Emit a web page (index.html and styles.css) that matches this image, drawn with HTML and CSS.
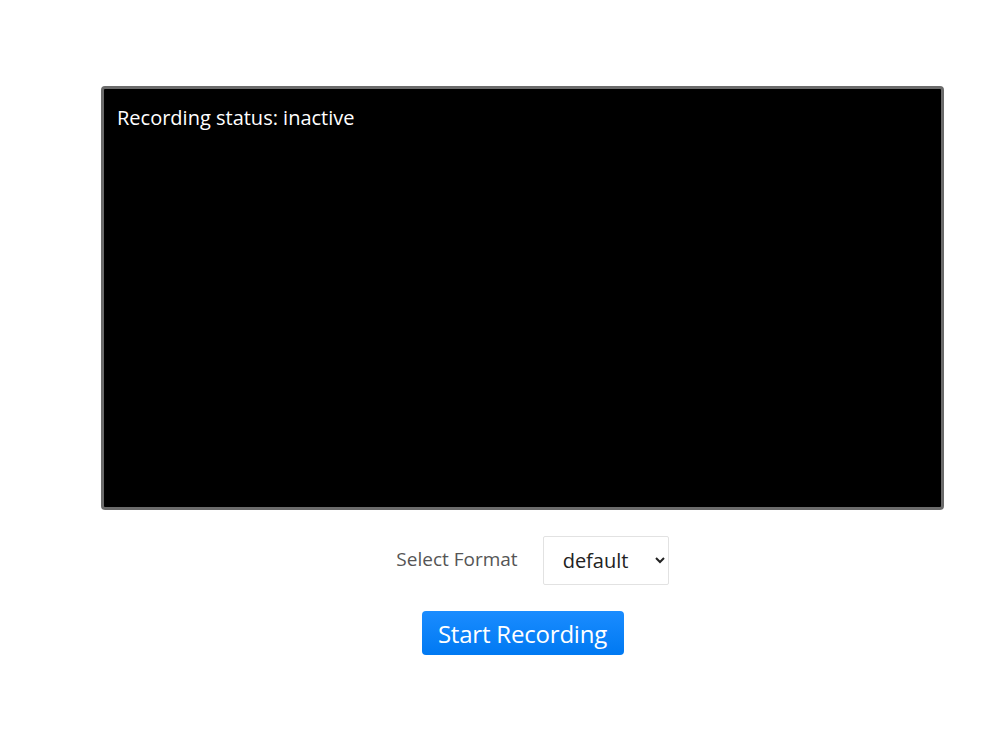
FILE: index.html
```html
<!DOCTYPE html>
<html>
<head>
<meta charset="utf-8">
<link rel="stylesheet" href="styles.css">
</head>
<body>
<main class="page">
  <section class="screen">
    <p class="status">Recording status: inactive</p>
  </section>
  <div class="format-row">
    <label class="format-label" for="fmt">Select Format</label>
    <select id="fmt" class="format-select">
      <option>default</option>
    </select>
  </div>
  <div class="actions">
    <button class="btn-start">Start Recording</button>
  </div>
</main>
</body>
</html>
```
FILE: styles.css
```css
html, body {
  margin: 0;
  padding: 0;
  background: #fff;
  font-family: "Open Sans", "Noto Sans", sans-serif;
}
.page {
  width: 843px;
  margin-left: 101px;
  padding-top: 86px;
  display: flex;
  flex-direction: column;
  align-items: center;
}
.screen {
  box-sizing: border-box;
  width: 843px;
  height: 424px;
  background: #000;
  border: 3px solid #6b6b6b;
  border-radius: 4px;
  padding: 15px 13px;
}
.status {
  margin: 0;
  color: #fff;
  font-size: 20px;
  line-height: 28px;
  letter-spacing: 0;
}
.format-row {
  margin-top: 26px;
  display: flex;
  align-items: center;
  gap: 25px;
  margin-left: 20px;
}
.format-label {
  color: #555;
  font-size: 19px;
  padding-bottom: 4px;
}
.format-select {
  box-sizing: border-box;
  width: 126px;
  height: 49px;
  background: #fff;
  border: 1px solid #e2e2e2;
  border-radius: 2px;
  font-family: "Open Sans", "Noto Sans", sans-serif;
  font-size: 20px;
  color: #222;
  padding: 0 0 0 15px;
}
.actions {
  margin-top: 26px;
}
.btn-start {
  box-sizing: border-box;
  width: 202px;
  height: 44px;
  background: linear-gradient(#1a8cff, #0079f2);
  color: #fff;
  border: none;
  border-radius: 4px;
  font-family: "Open Sans", "Noto Sans", sans-serif;
  font-size: 24px;
  letter-spacing: -0.2px;
  padding: 0;
}
```
